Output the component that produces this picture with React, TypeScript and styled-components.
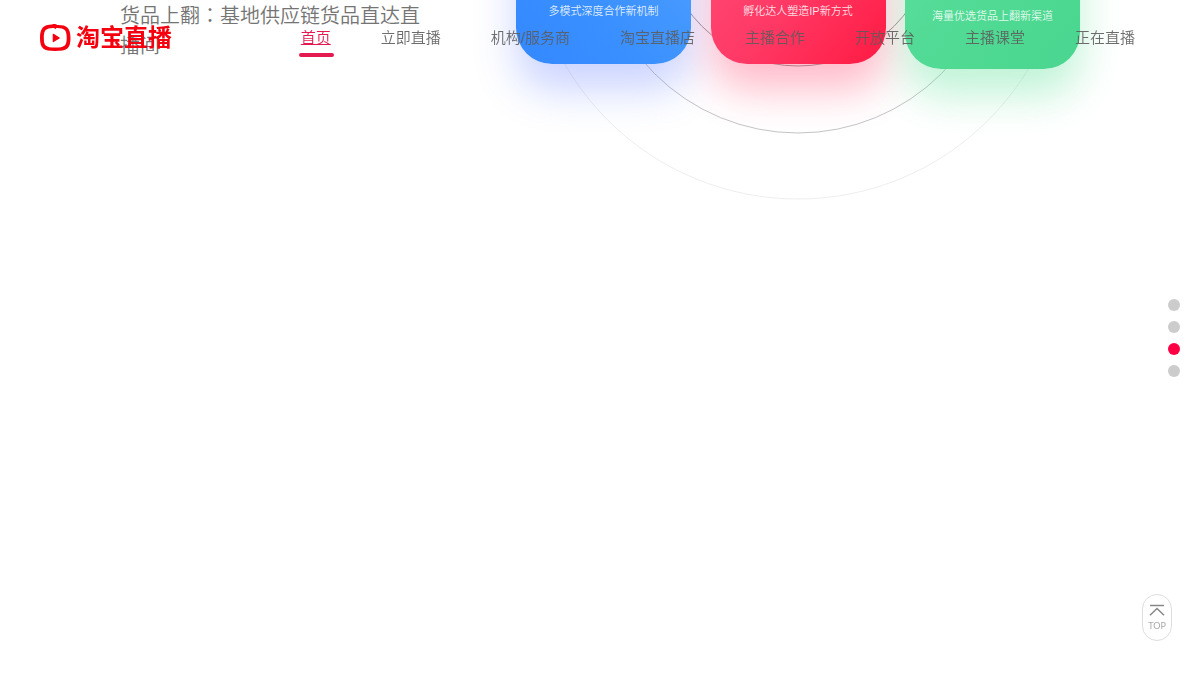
import React from "react";
import styled, { createGlobalStyle } from "styled-components";

const GlobalStyle = createGlobalStyle`
  * { box-sizing: border-box; }
  body {
    margin: 0;
    background: #fff;
    color: #666;
    font-family: "Liberation Sans", "Noto Sans CJK SC", sans-serif;
    font-weight: 350;
  }
`;

const Page = styled.div`
  min-height: 100vh;
  overflow: hidden;
`;

const Header = styled.header`
  position: fixed;
  top: 0;
  left: 0;
  right: 0;
  z-index: 10;
  display: flex;
  align-items: center;
  justify-content: space-between;
  height: 76px;
  padding: 0 65px 0 40px;
`;

const Logo = styled.a`
  display: flex;
  align-items: center;
  gap: 5px;
  color: #f5000f;
  font-size: 24px;
  line-height: 24px;
  font-weight: 700;
  text-decoration: none;
`;

const Nav = styled.nav`
  display: flex;
  gap: 50px;
  opacity: 0.9;
`;

const NavLink = styled.a<{ $active?: boolean }>`
  position: relative;
  font-size: 15px;
  line-height: 20px;
  white-space: nowrap;
  color: ${(p) => (p.$active ? "#e0003c" : "#5c5c5c")};
  text-decoration: ${(p) => (p.$active ? "underline" : "none")};

  &::after {
    content: "";
    display: ${(p) => (p.$active ? "block" : "none")};
    position: absolute;
    left: -2px;
    right: -3px;
    top: 25px;
    height: 4px;
    border-radius: 2px;
    background: #e0003c;
  }
`;

const Section = styled.main`
  display: flex;
  justify-content: space-between;
  padding: 0 120px;
`;

const Copy = styled.p`
  flex: 0 1 310px;
  margin: 0;
  font-size: 20px;
  line-height: 30px;
  color: #747474;
`;

const Centered = styled.span`
  font-family: "Noto Sans CJK JP", sans-serif;
`;

const Stage = styled.div`
  position: relative;
  isolation: isolate;
  display: flex;
  align-items: flex-start;
  justify-content: space-between;
  flex: 0 0 564px;
  margin-top: -160px;
`;

const Rings = styled.svg`
  position: absolute;
  z-index: -2;
  left: 50%;
  bottom: -131px;
  transform: translateX(-50%);
`;

const Card = styled.article<{ $fill: string; $shadow: string; $height: number }>`
  position: relative;
  display: flex;
  align-items: flex-end;
  justify-content: center;
  width: 175px;
  height: ${(p) => p.$height}px;
  padding-bottom: 44px;
  border-radius: 36px;
  background: ${(p) => p.$fill};
  color: rgba(255, 255, 255, 0.85);
  font-size: 11px;
  line-height: 18px;
  white-space: nowrap;

  &::before {
    content: "";
    position: absolute;
    inset: 0;
    z-index: -1;
    border-radius: 36px;
    box-shadow: 0 26px 42px ${(p) => p.$shadow};
  }
`;

const Dots = styled.nav`
  position: fixed;
  right: 20px;
  top: 50%;
  transform: translateY(-50%);
  display: grid;
  gap: 10px;
`;

const Dot = styled.button<{ $active: boolean }>`
  width: 12px;
  height: 12px;
  padding: 0;
  border: 0;
  border-radius: 50%;
  background: ${(p) => (p.$active ? "#ff0044" : "#ccc")};
`;

const TopButton = styled.button`
  position: fixed;
  right: 28px;
  bottom: 34px;
  display: flex;
  flex-direction: column;
  align-items: center;
  gap: 5px;
  width: 30px;
  height: 47px;
  padding: 9px 0 0;
  border: 1px solid #ddd;
  border-radius: 15px;
  background: #fff;
  color: #aaa;
  font: 400 9px/10px Lato, sans-serif;
`;

const links = ["首页", "立即直播", "机构/服务商", "淘宝直播店", "主播合作", "开放平台", "主播课堂", "正在直播"];

const cards = [
  { text: "多模式深度合作新机制", height: 224, fill: "linear-gradient(50deg, #3388ff 0%, #3a90ff 35%, #55a6ff 100%)", shadow: "rgba(70, 100, 255, 0.28)" },
  { text: "孵化达人塑造IP新方式", height: 224, fill: "linear-gradient(130deg, #ff5580 0%, #ff3864 60%, #ff1a42 100%)", shadow: "rgba(255, 50, 95, 0.33)" },
  { text: "海量优选货品上翻新渠道", height: 229, fill: "linear-gradient(130deg, #60e0a0 0%, #50da94 60%, #4ad690 100%)", shadow: "rgba(60, 220, 130, 0.33)" },
];

export default function App() {
  return (
    <Page>
      <GlobalStyle />
      <Header>
        <Logo href="#home">
          <svg width="31" height="28" viewBox="0 0 31 28" aria-hidden="true">
            <path
              fillRule="evenodd"
              d="M12 0.500 C14.500 -0.200 16.200 0.100 17.200 1 C26.500 0.800 30.500 3.500 30.500 14 C30.500 24.500 27 27 15.200 27 C3.500 27 0 24.500 0 14 C0 4 3.500 0.800 12 0.500 Z M13 4 C6 4.200 3.800 6 3.800 14 C3.800 22 5.800 23.500 15.200 23.500 C24.700 23.500 26.700 22 26.700 14 C26.700 6 24.500 4.200 17.500 4 C16.400 4 15.800 4.400 15.300 5.200 C14.900 4.300 14.300 4 13 4 Z"
              fill="currentColor"
            />
            <path d="M13.300 10.300 L19.200 13.900 L13.300 17.500 Z" fill="currentColor" stroke="currentColor" strokeWidth="1.200" strokeLinejoin="round" />
          </svg>
          淘宝直播
        </Logo>
        <Nav aria-label="主导航">
          {links.map((label, i) => (
            <NavLink key={label} href={`#nav-${i}`} $active={i === 0}>
              {label}
            </NavLink>
          ))}
        </Nav>
      </Header>
      <Section>
        <Copy>
          货品上翻<Centered lang="ja">：</Centered>基地供应链货品直达直播间
        </Copy>
        <Stage>
          <Rings width="540" height="540" viewBox="0 0 540 540" fill="none" aria-hidden="true">
            <circle cx="270" cy="270" r="269" stroke="#eee" />
            <circle cx="270" cy="270" r="203" stroke="#c4c4c8" />
            <circle cx="270" cy="270" r="136" stroke="#999" />
          </Rings>
          {cards.map((card) => (
            <Card key={card.text} $fill={card.fill} $shadow={card.shadow} $height={card.height}>
              {card.text}
            </Card>
          ))}
        </Stage>
      </Section>
      <Dots aria-label="页面分屏">
        {[1, 2, 3, 4].map((n) => (
          <Dot key={n} type="button" aria-label={`第${n}屏`} $active={n === 3} />
        ))}
      </Dots>
      <TopButton type="button">
        <svg width="16" height="12" viewBox="0 0 16 12" fill="none" stroke="#888" strokeWidth="1.500" aria-hidden="true">
          <path d="M1 1.500 H15 M1 11.300 L8 4.500 L15 11.300" />
        </svg>
        TOP
      </TopButton>
    </Page>
  );
}
